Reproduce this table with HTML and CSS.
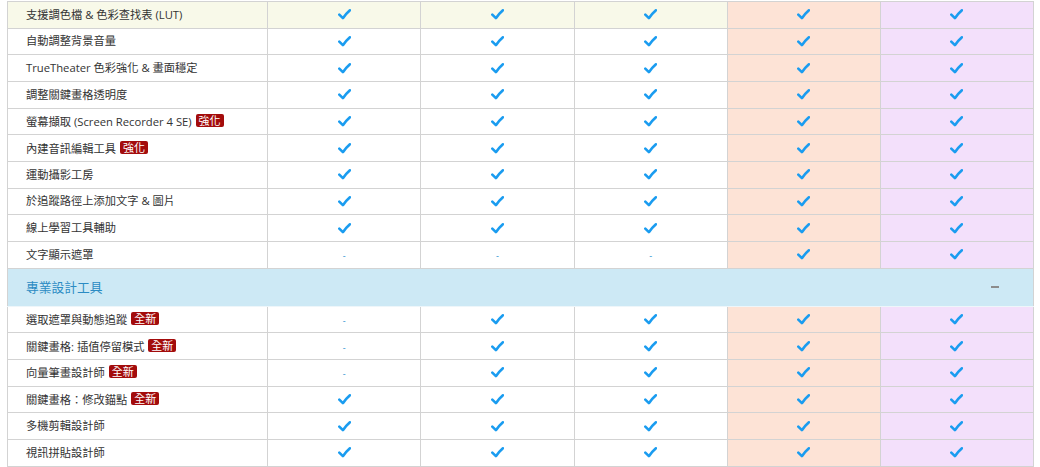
FILE: index.html
```html
<!DOCTYPE html>
<html lang="zh-Hant">
<head>
<meta charset="utf-8">
<title>功能比較</title>
<link rel="stylesheet" href="styles.css">
</head>
<body>
<svg class="defs" width="0" height="0" aria-hidden="true">
  <symbol id="ck" viewBox="0 0 13 11">
    <path d="M1.3 5.6 L4.9 9.2 C7 6.2 9.3 3.6 11.9 1.3" fill="none" stroke="currentColor" stroke-width="2.6" stroke-linecap="round" stroke-linejoin="round"/>
  </symbol>
</svg>
<div class="wrap">
<table class="cmp">
  <colgroup>
    <col class="c-name"><col class="c-v"><col class="c-v"><col class="c-v"><col class="c-v"><col class="c-v">
  </colgroup>
  <tbody>
    <tr class="hl">
      <td class="name">支援調色檔 &amp; 色彩查找表 (LUT)</td>
      <td><svg class="ck"><use href="#ck"/></svg></td><td><svg class="ck"><use href="#ck"/></svg></td><td><svg class="ck"><use href="#ck"/></svg></td><td class="p4"><svg class="ck"><use href="#ck"/></svg></td><td class="p5"><svg class="ck"><use href="#ck"/></svg></td>
    </tr>
    <tr>
      <td class="name">自動調整背景音量</td>
      <td><svg class="ck"><use href="#ck"/></svg></td><td><svg class="ck"><use href="#ck"/></svg></td><td><svg class="ck"><use href="#ck"/></svg></td><td class="p4"><svg class="ck"><use href="#ck"/></svg></td><td class="p5"><svg class="ck"><use href="#ck"/></svg></td>
    </tr>
    <tr>
      <td class="name">TrueTheater 色彩強化 &amp; 畫面穩定</td>
      <td><svg class="ck"><use href="#ck"/></svg></td><td><svg class="ck"><use href="#ck"/></svg></td><td><svg class="ck"><use href="#ck"/></svg></td><td class="p4"><svg class="ck"><use href="#ck"/></svg></td><td class="p5"><svg class="ck"><use href="#ck"/></svg></td>
    </tr>
    <tr>
      <td class="name">調整關鍵畫格透明度</td>
      <td><svg class="ck"><use href="#ck"/></svg></td><td><svg class="ck"><use href="#ck"/></svg></td><td><svg class="ck"><use href="#ck"/></svg></td><td class="p4"><svg class="ck"><use href="#ck"/></svg></td><td class="p5"><svg class="ck"><use href="#ck"/></svg></td>
    </tr>
    <tr>
      <td class="name">螢幕擷取 (Screen Recorder 4 SE) <span class="badge">強化</span></td>
      <td><svg class="ck"><use href="#ck"/></svg></td><td><svg class="ck"><use href="#ck"/></svg></td><td><svg class="ck"><use href="#ck"/></svg></td><td class="p4"><svg class="ck"><use href="#ck"/></svg></td><td class="p5"><svg class="ck"><use href="#ck"/></svg></td>
    </tr>
    <tr>
      <td class="name">內建音訊編輯工具 <span class="badge">強化</span></td>
      <td><svg class="ck"><use href="#ck"/></svg></td><td><svg class="ck"><use href="#ck"/></svg></td><td><svg class="ck"><use href="#ck"/></svg></td><td class="p4"><svg class="ck"><use href="#ck"/></svg></td><td class="p5"><svg class="ck"><use href="#ck"/></svg></td>
    </tr>
    <tr>
      <td class="name">運動攝影工房</td>
      <td><svg class="ck"><use href="#ck"/></svg></td><td><svg class="ck"><use href="#ck"/></svg></td><td><svg class="ck"><use href="#ck"/></svg></td><td class="p4"><svg class="ck"><use href="#ck"/></svg></td><td class="p5"><svg class="ck"><use href="#ck"/></svg></td>
    </tr>
    <tr>
      <td class="name">於追蹤路徑上添加文字 &amp; 圖片</td>
      <td><svg class="ck"><use href="#ck"/></svg></td><td><svg class="ck"><use href="#ck"/></svg></td><td><svg class="ck"><use href="#ck"/></svg></td><td class="p4"><svg class="ck"><use href="#ck"/></svg></td><td class="p5"><svg class="ck"><use href="#ck"/></svg></td>
    </tr>
    <tr>
      <td class="name">線上學習工具輔助</td>
      <td><svg class="ck"><use href="#ck"/></svg></td><td><svg class="ck"><use href="#ck"/></svg></td><td><svg class="ck"><use href="#ck"/></svg></td><td class="p4"><svg class="ck"><use href="#ck"/></svg></td><td class="p5"><svg class="ck"><use href="#ck"/></svg></td>
    </tr>
    <tr>
      <td class="name">文字顯示遮罩</td>
      <td><span class="no">-</span></td><td><span class="no">-</span></td><td><span class="no">-</span></td><td class="p4"><svg class="ck"><use href="#ck"/></svg></td><td class="p5"><svg class="ck"><use href="#ck"/></svg></td>
    </tr>
    <tr class="sec">
      <td colspan="6"><div class="sec-in"><span class="sec-title">專業設計工具</span><span class="toggle" aria-label="收合"></span></div></td>
    </tr>
    <tr>
      <td class="name">選取遮罩與動態追蹤 <span class="badge">全新</span></td>
      <td><span class="no">-</span></td><td><svg class="ck"><use href="#ck"/></svg></td><td><svg class="ck"><use href="#ck"/></svg></td><td class="p4"><svg class="ck"><use href="#ck"/></svg></td><td class="p5"><svg class="ck"><use href="#ck"/></svg></td>
    </tr>
    <tr>
      <td class="name">關鍵畫格: 插值停留模式 <span class="badge">全新</span></td>
      <td><span class="no">-</span></td><td><svg class="ck"><use href="#ck"/></svg></td><td><svg class="ck"><use href="#ck"/></svg></td><td class="p4"><svg class="ck"><use href="#ck"/></svg></td><td class="p5"><svg class="ck"><use href="#ck"/></svg></td>
    </tr>
    <tr>
      <td class="name">向量筆畫設計師 <span class="badge">全新</span></td>
      <td><span class="no">-</span></td><td><svg class="ck"><use href="#ck"/></svg></td><td><svg class="ck"><use href="#ck"/></svg></td><td class="p4"><svg class="ck"><use href="#ck"/></svg></td><td class="p5"><svg class="ck"><use href="#ck"/></svg></td>
    </tr>
    <tr>
      <td class="name">關鍵畫格：修改錨點 <span class="badge">全新</span></td>
      <td><svg class="ck"><use href="#ck"/></svg></td><td><svg class="ck"><use href="#ck"/></svg></td><td><svg class="ck"><use href="#ck"/></svg></td><td class="p4"><svg class="ck"><use href="#ck"/></svg></td><td class="p5"><svg class="ck"><use href="#ck"/></svg></td>
    </tr>
    <tr>
      <td class="name">多機剪輯設計師</td>
      <td><svg class="ck"><use href="#ck"/></svg></td><td><svg class="ck"><use href="#ck"/></svg></td><td><svg class="ck"><use href="#ck"/></svg></td><td class="p4"><svg class="ck"><use href="#ck"/></svg></td><td class="p5"><svg class="ck"><use href="#ck"/></svg></td>
    </tr>
    <tr>
      <td class="name">視訊拼貼設計師</td>
      <td><svg class="ck"><use href="#ck"/></svg></td><td><svg class="ck"><use href="#ck"/></svg></td><td><svg class="ck"><use href="#ck"/></svg></td><td class="p4"><svg class="ck"><use href="#ck"/></svg></td><td class="p5"><svg class="ck"><use href="#ck"/></svg></td>
    </tr>
  </tbody>
</table>
</div>
</body>
</html>
```
FILE: styles.css
```css
html, body {
  margin: 0;
  padding: 0;
  background: #ffffff;
}
body {
  font-family: "Open Sans", "Noto Sans CJK TC", sans-serif;
  color: #333333;
  overflow: hidden;
}
.defs {
  position: absolute;
  width: 0;
  height: 0;
}
.wrap {
  padding: 1px 0 0 7px;
}
.cmp {
  border-collapse: collapse;
  table-layout: fixed;
  width: 1027px;
}
.c-name { width: 260px; }
.c-v { width: 153px; }
.cmp td {
  border: 1px solid #d3d3d3;
  height: 26.67px;
  padding: 0;
  text-align: center;
  vertical-align: middle;
  box-sizing: border-box;
  line-height: 14px;
}
.cmp td.name {
  text-align: left;
  padding-left: 18px;
  font-size: 11.25px;
  white-space: nowrap;
}
.cmp tr.hl td { background: #f8f9e9; }
.cmp td.p4, .cmp tr.hl td.p4 { background: #fde3d6; }
.cmp td.p5, .cmp tr.hl td.p5 { background: #f3e0fb; }
.ck {
  display: block;
  width: 13px;
  height: 11px;
  margin: 0 auto;
  color: #1a9cf0;
}
.no {
  font-size: 9px;
  color: #1e8fcf;
}
.badge {
  display: inline-block;
  background: #a30c0c;
  color: #ffffff;
  font-size: 11px;
  line-height: 13px;
  padding: 0 3px;
  border-radius: 2px;
  margin-left: 1px;
  vertical-align: 1px;
}
.cmp tr.sec td {
  height: 38px;
  background: #cde9f5;
  text-align: left;
  border-left: 1px solid #d3d3d3;
  border-right: 1px solid #d3d3d3;
  border-bottom: 1px solid #eef6fa;
}
.sec-in {
  display: flex;
  align-items: center;
  justify-content: space-between;
  padding: 0 34px 0 18px;
}
.sec-title {
  font-size: 12.75px;
  color: #2a8bc3;
}
.toggle {
  display: block;
  width: 8px;
  height: 2px;
  background: #8c8c8c;
}
```
